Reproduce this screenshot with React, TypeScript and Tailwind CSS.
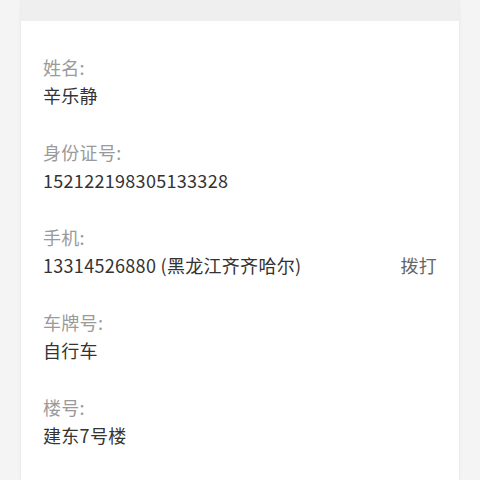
const rows = [
  { label: "姓名:", value: "辛乐静" },
  { label: "身份证号:", value: "152122198305133328" },
  { label: "手机:", value: "13314526880 (黑龙江齐齐哈尔)", action: "拨打" },
  { label: "车牌号:", value: "自行车" },
  { label: "楼号:", value: "建东7号楼" },
];

export default function App() {
  return (
    <div
      className="h-[480px] w-[480px] overflow-hidden bg-[#f4f4f4] px-[21px]"
      style={{ fontFamily: '"Noto Sans CJK SC", "Noto Sans", sans-serif' }}
    >
      <div className="h-full bg-white shadow-[0_0_3px_rgba(0,0,0,0.08)]">
        <div className="h-[21px] bg-[#efefef]" />
        <div className="pt-[32px] pl-[22px] pr-[22px]">
          {rows.map((r) => (
            <div key={r.label} className="mb-[29px] tracking-[0.3px]">
              <div className="text-[18px] leading-[28px] text-[#9a9a9a]">{r.label}</div>
              <div className="flex items-center justify-between text-[18px] leading-[28px] text-[#333]">
                <span>{r.value}</span>
                {r.action && <span className="text-[#666]">{r.action}</span>}
              </div>
            </div>
          ))}
        </div>
      </div>
    </div>
  );
}
